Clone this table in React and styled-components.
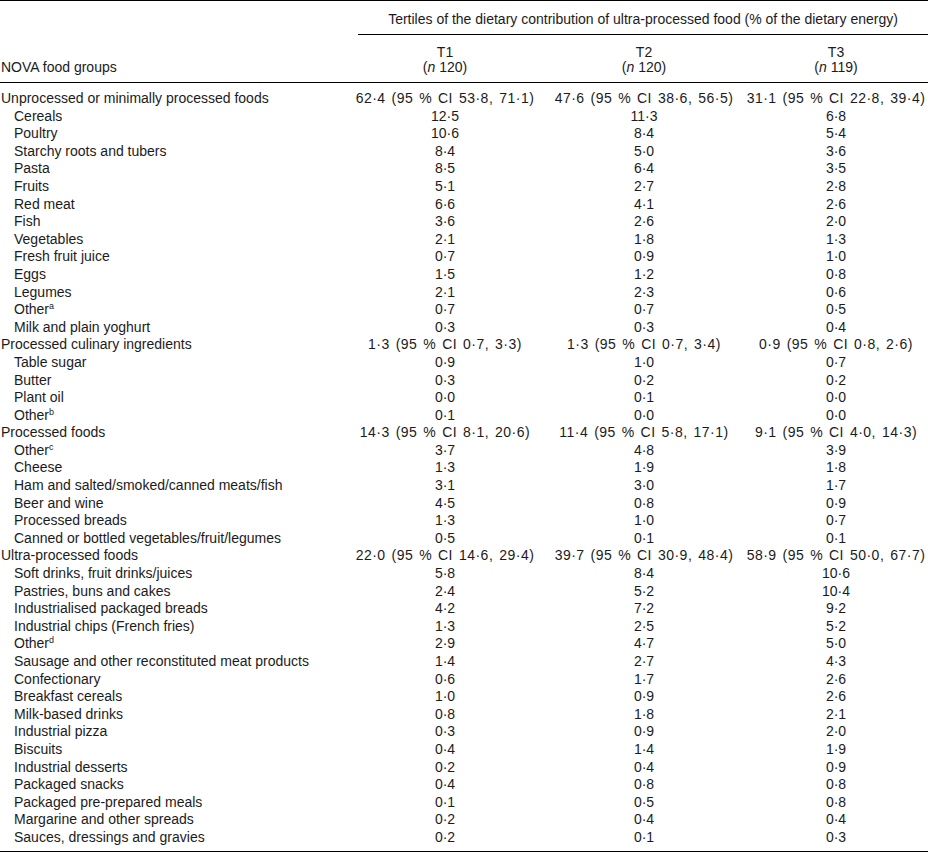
import React from "react";
import styled, { createGlobalStyle } from "styled-components";

const groups = [
  {
    name: "Unprocessed or minimally processed foods",
    values: ["62·4 (95 % CI 53·8, 71·1)", "47·6 (95 % CI 38·6, 56·5)", "31·1 (95 % CI 22·8, 39·4)"],
    items: [
      ["Cereals", null, "12·5", "11·3", "6·8"],
      ["Poultry", null, "10·6", "8·4", "5·4"],
      ["Starchy roots and tubers", null, "8·4", "5·0", "3·6"],
      ["Pasta", null, "8·5", "6·4", "3·5"],
      ["Fruits", null, "5·1", "2·7", "2·8"],
      ["Red meat", null, "6·6", "4·1", "2·6"],
      ["Fish", null, "3·6", "2·6", "2·0"],
      ["Vegetables", null, "2·1", "1·8", "1·3"],
      ["Fresh fruit juice", null, "0·7", "0·9", "1·0"],
      ["Eggs", null, "1·5", "1·2", "0·8"],
      ["Legumes", null, "2·1", "2·3", "0·6"],
      ["Other", "a", "0·7", "0·7", "0·5"],
      ["Milk and plain yoghurt", null, "0·3", "0·3", "0·4"],
    ],
  },
  {
    name: "Processed culinary ingredients",
    values: ["1·3 (95 % CI 0·7, 3·3)", "1·3 (95 % CI 0·7, 3·4)", "0·9 (95 % CI 0·8, 2·6)"],
    items: [
      ["Table sugar", null, "0·9", "1·0", "0·7"],
      ["Butter", null, "0·3", "0·2", "0·2"],
      ["Plant oil", null, "0·0", "0·1", "0·0"],
      ["Other", "b", "0·1", "0·0", "0·0"],
    ],
  },
  {
    name: "Processed foods",
    values: ["14·3 (95 % CI 8·1, 20·6)", "11·4 (95 % CI 5·8, 17·1)", "9·1 (95 % CI 4·0, 14·3)"],
    items: [
      ["Other", "c", "3·7", "4·8", "3·9"],
      ["Cheese", null, "1·3", "1·9", "1·8"],
      ["Ham and salted/smoked/canned meats/fish", null, "3·1", "3·0", "1·7"],
      ["Beer and wine", null, "4·5", "0·8", "0·9"],
      ["Processed breads", null, "1·3", "1·0", "0·7"],
      ["Canned or bottled vegetables/fruit/legumes", null, "0·5", "0·1", "0·1"],
    ],
  },
  {
    name: "Ultra-processed foods",
    values: ["22·0 (95 % CI 14·6, 29·4)", "39·7 (95 % CI 30·9, 48·4)", "58·9 (95 % CI 50·0, 67·7)"],
    items: [
      ["Soft drinks, fruit drinks/juices", null, "5·8", "8·4", "10·6"],
      ["Pastries, buns and cakes", null, "2·4", "5·2", "10·4"],
      ["Industrialised packaged breads", null, "4·2", "7·2", "9·2"],
      ["Industrial chips (French fries)", null, "1·3", "2·5", "5·2"],
      ["Other", "d", "2·9", "4·7", "5·0"],
      ["Sausage and other reconstituted meat products", null, "1·4", "2·7", "4·3"],
      ["Confectionary", null, "0·6", "1·7", "2·6"],
      ["Breakfast cereals", null, "1·0", "0·9", "2·6"],
      ["Milk-based drinks", null, "0·8", "1·8", "2·1"],
      ["Industrial pizza", null, "0·3", "0·9", "2·0"],
      ["Biscuits", null, "0·4", "1·4", "1·9"],
      ["Industrial desserts", null, "0·2", "0·4", "0·9"],
      ["Packaged snacks", null, "0·4", "0·8", "0·8"],
      ["Packaged pre-prepared meals", null, "0·1", "0·5", "0·8"],
      ["Margarine and other spreads", null, "0·2", "0·4", "0·4"],
      ["Sauces, dressings and gravies", null, "0·2", "0·1", "0·3"],
    ],
  },
];

const tertiles = [
  ["T1", "120"],
  ["T2", "120"],
  ["T3", "119"],
];

export default function App() {
  return (
    <>
      <GlobalStyle />
      <Table>
        <colgroup>
          <col style={{ width: "346px" }} />
          <col style={{ width: "198px" }} />
          <col style={{ width: "200px" }} />
          <col style={{ width: "184px" }} />
        </colgroup>
        <thead>
          <tr>
            <HeadCell />
            <HeadCell colSpan={3}>
              <SpanTitle>
                Tertiles of the dietary contribution of ultra-processed food (% of the dietary energy)
              </SpanTitle>
            </HeadCell>
          </tr>
          <ColumnHeadRow>
            <LabelHead>NOVA food groups</LabelHead>
            {tertiles.map(([t, n]) => (
              <TertileHead key={t}>
                <div>{t}</div>
                <div>
                  (<i>n</i> {n})
                </div>
              </TertileHead>
            ))}
          </ColumnHeadRow>
        </thead>
        <tbody>
          <SpacerRow $h={7}>
            <td colSpan={4} />
          </SpacerRow>
          {groups.map((g) => (
            <React.Fragment key={g.name}>
              <Row>
                <Label>{g.name}</Label>
                {g.values.map((v, i) => (
                  <Value key={i} $ci>
                    {v}
                  </Value>
                ))}
              </Row>
              {g.items.map(([name, sup, ...vals]) => (
                <Row key={name + (sup || "")}>
                  <Label $indent>
                    {name}
                    {sup && <Sup>{sup}</Sup>}
                  </Label>
                  {vals.map((v, i) => (
                    <Value key={i}>{v}</Value>
                  ))}
                </Row>
              ))}
            </React.Fragment>
          ))}
          <SpacerRow $h={4}>
            <td colSpan={4} />
          </SpacerRow>
        </tbody>
      </Table>
    </>
  );
}

const GlobalStyle = createGlobalStyle`
  html, body {
    margin: 0;
    padding: 0;
    background: #fff;
  }
`;

const Table = styled.table`
  width: 928px;
  table-layout: fixed;
  border-collapse: collapse;
  border-top: 1px solid #000;
  border-bottom: 1px solid #000;
  font-family: "Liberation Sans", Arial, sans-serif;
  font-size: 14px;
  color: #1b1b1b;
`;

const HeadCell = styled.th`
  padding: 0;
  font-weight: normal;
`;

const SpanTitle = styled.div`
  margin-left: 12px;
  padding: 10px 0 6px;
  line-height: 17px;
  text-align: center;
  border-bottom: 1px solid #000;
`;

const ColumnHeadRow = styled.tr`
  border-bottom: 1px solid #000;
`;

const LabelHead = styled.th`
  padding: 10px 0 7px 1px;
  font-weight: normal;
  text-align: left;
  vertical-align: bottom;
  line-height: 15px;
`;

const TertileHead = styled.th`
  padding: 10px 0 7px;
  font-weight: normal;
  text-align: center;
  vertical-align: bottom;
  line-height: 15px;
`;

const SpacerRow = styled.tr`
  td {
    height: ${(p) => p.$h}px;
    padding: 0;
  }
`;

const Row = styled.tr`
  td {
    height: 17.6px;
    padding: 0;
    line-height: 17.6px;
    white-space: nowrap;
  }
`;

const Label = styled.td`
  text-align: left;
  padding-left: ${(p) => (p.$indent ? "14px" : "1px")} !important;
`;

const Value = styled.td`
  text-align: center;
  letter-spacing: ${(p) => (p.$ci ? "0.5px" : "0")};
  word-spacing: ${(p) => (p.$ci ? "1.5px" : "0")};
`;

const Sup = styled.sup`
  font-size: 9px;
  line-height: 0;
  vertical-align: 5px;
`;
